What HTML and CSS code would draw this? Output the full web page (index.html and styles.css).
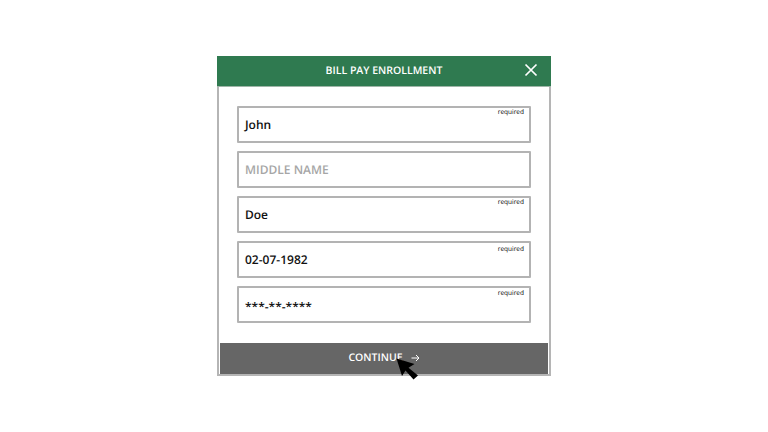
FILE: index.html
```html
<!DOCTYPE html>
<html>
    <head>
        <title>Bill Pay Enrollment</title>
        <meta charset="UTF-8">
        <meta name="viewport" content="width=device-width">
        <link rel="stylesheet" href="styles.css">
    </head>
    <body>
        <div class="modal">
            <header class="modal-head">
                <span class="modal-title">BILL PAY ENROLLMENT</span>
                <svg class="close" width="14" height="14" viewBox="0 0 14 14">
                    <path d="M1.5 1.5L12.5 12.5M12.5 1.5L1.5 12.5" stroke="#fff" stroke-width="1.7" fill="none"/>
                </svg>
            </header>
            <div class="fields">
                <div class="field"><span class="req">required</span><span class="value">John</span></div>
                <div class="field"><span class="value empty">MIDDLE NAME</span></div>
                <div class="field"><span class="req">required</span><span class="value">Doe</span></div>
                <div class="field"><span class="req low">required</span><span class="value">02-07-1982</span></div>
                <div class="field"><span class="req mid">required</span><span class="value masked">***-**-****</span></div>
            </div>
            <div class="continue">
                <span>CONTINUE</span>
                <svg class="arrow" width="9" height="8" viewBox="0 0 9 8">
                    <path d="M0.5 4H8M5 1L8 4L5 7" stroke="#fff" stroke-width="1" fill="none"/>
                </svg>
                <svg class="cursor" width="24" height="23" viewBox="0 0 24 23">
                    <path d="M1.5 0.5L19.5 6L13.5 9.8L23 17.5L18.5 21.5L10.5 12.5L7 18Z" fill="#000"/>
                </svg>
            </div>
        </div>
    </body>
</html>
```

FILE: styles.css
```css
*
{
    box-sizing: border-box;
}
body
{
    margin: 0;
    width: 768px;
    height: 432px;
    display: flex;
    align-items: center;
    justify-content: center;
    background: #fff;
    font-family: "Open Sans", sans-serif;
    text-rendering: geometricPrecision;
}
.modal
{
    width: 334px;
    height: 320px;
    display: flex;
    flex-direction: column;
    border: 2px solid #b5b5b5;
    border-top: none;
    background: #fff;
}
.modal-head
{
    position: relative;
    height: 31px;
    margin: 0 -2px;
    display: flex;
    align-items: center;
    justify-content: center;
    background: #2f7a50;
    border-bottom: 1px solid #9fb5a8;
}
.modal-title
{
    color: #fff;
    font-size: 10.5px;
    font-weight: 600;
}
.close
{
    position: absolute;
    right: 13px;
    top: 7px;
}
.fields
{
    display: flex;
    flex-direction: column;
    gap: 8px;
    padding: 19px 18px 0;
}
.field
{
    position: relative;
    height: 37px;
    display: flex;
    align-items: center;
    padding: 0 6px;
    border: 2px solid #b3b3b3;
    border-radius: 1px;
}
.req
{
    position: absolute;
    top: -1px;
    right: 5px;
    color: #000;
    font-size: 6.5px;
    line-height: 9px;
}
.req.low
{
    top: 1px;
}
.req.mid
{
    top: 0;
}
.value
{
    margin-bottom: 1px;
    color: #111;
    font-size: 12px;
    font-weight: 600;
}
.value.empty
{
    color: #a6a6a6;
}
.value.masked
{
    padding-top: 4px;
}
.continue
{
    position: relative;
    height: 31px;
    margin: 20px 1px 0;
    display: flex;
    align-items: center;
    justify-content: center;
    gap: 8px;
    padding-bottom: 2px;
    background: #666;
    color: #fff;
    font-size: 10.5px;
    font-weight: 600;
}
.arrow
{
    margin-top: 1px;
}
.cursor
{
    position: absolute;
    left: 175px;
    top: 15px;
}
```
